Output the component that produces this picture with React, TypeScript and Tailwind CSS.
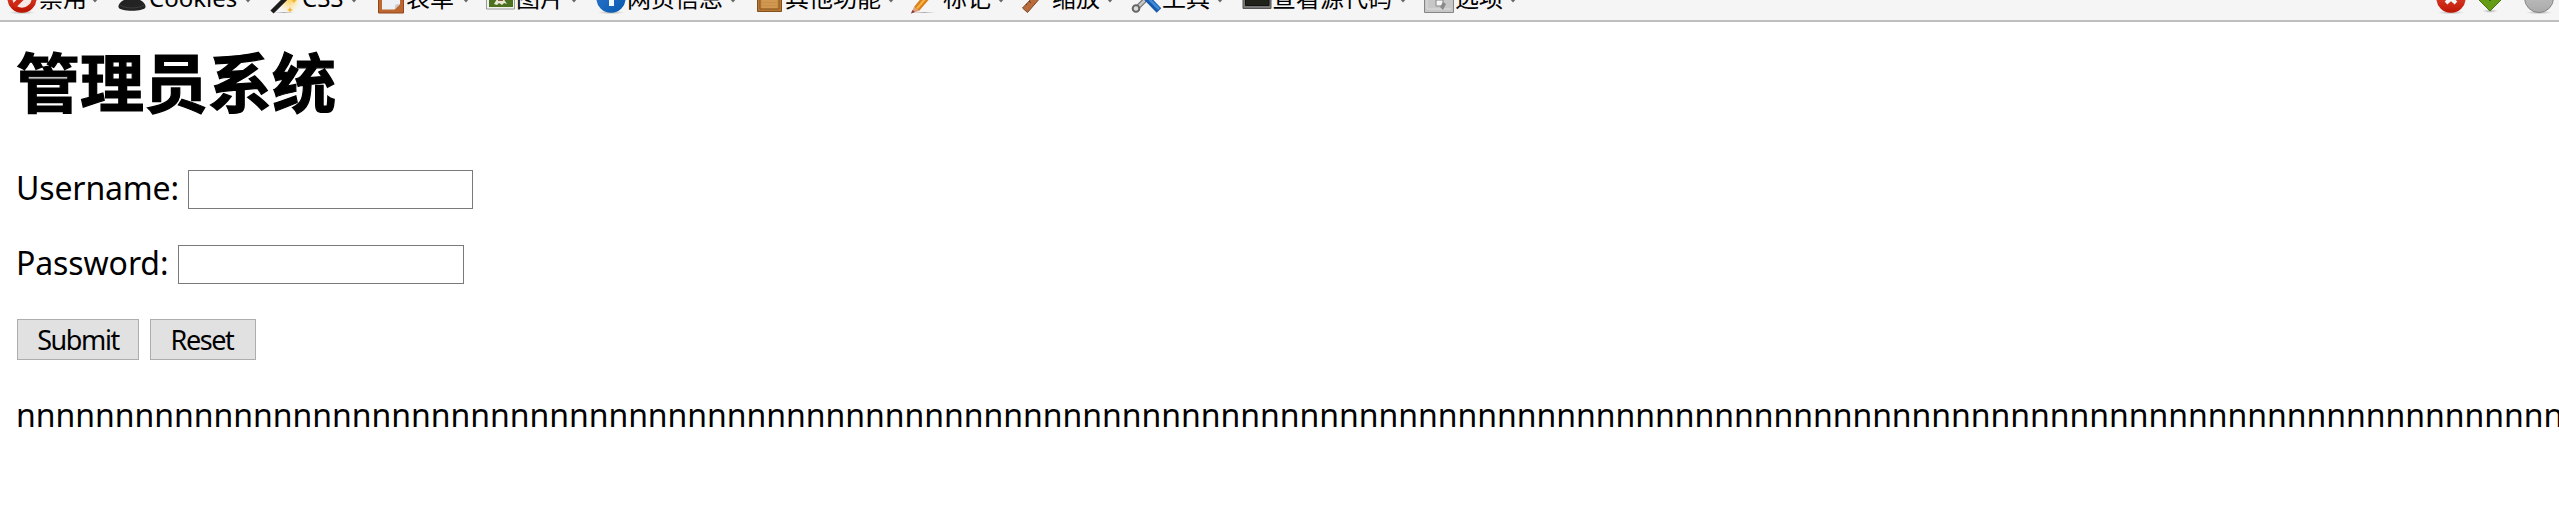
import type { ReactNode } from "react";

type Item = { label: string; width: string; gap: string; textWidth: string; icon: ReactNode };

const Defs = () => (
  <svg className="absolute h-0 w-0">
    <defs>
      <linearGradient id="red" x1="0" y1="0" x2="0" y2="1">
        <stop offset="0" stopColor="#ee5a45" />
        <stop offset="1" stopColor="#bd1603" />
      </linearGradient>
      <linearGradient id="blue" x1="0" y1="0" x2="1" y2="1">
        <stop offset="0" stopColor="#2f79cf" />
        <stop offset="1" stopColor="#0757ae" />
      </linearGradient>
      <linearGradient id="gray" x1="0" y1="0" x2="0" y2="1">
        <stop offset="0" stopColor="#c8c8c8" />
        <stop offset="1" stopColor="#aaaaaa" />
      </linearGradient>
      <radialGradient id="glow">
        <stop offset="0" stopColor="#ffd35a" />
        <stop offset="1" stopColor="#ffe9a8" stopOpacity="0" />
      </radialGradient>
      <radialGradient id="shadow">
        <stop offset="0" stopColor="#777" stopOpacity=".6" />
        <stop offset="1" stopColor="#999" stopOpacity="0" />
      </radialGradient>
    </defs>
  </svg>
);

const Svg = ({ children }: { children: ReactNode }) => (
  <svg width="30" height="20" viewBox="0 0 30 20" className="block shrink-0">
    {children}
  </svg>
);

const Shadow = ({ y = 12.5 }: { y?: number }) => <ellipse cx="15" cy={y} rx="14" ry="1.8" fill="url(#shadow)" />;

const items: Item[] = [
  {
    label: "禁用", width: "w-[110px]", gap: "ml-[2px]", textWidth: "w-[52px]",
    icon: (
      <Svg>
        <Shadow />
        <circle cx="15" cy="-2" r="12.2" fill="#f7e9e6" stroke="url(#red)" strokeWidth="5" />
        <path d="M23-10 7 6" stroke="#cf2915" strokeWidth="5" />
      </Svg>
    ),
  },
  {
    label: "Cookies", width: "w-[153px]", gap: "ml-[2px]", textWidth: "w-[95px]",
    icon: (
      <Svg>
        <path d="M9-5H20L20-1C25 0 29 4 28.5 7 28 12 2 12 1.500 7 1 4 5 0 10-1Z" fill="#232323" />
        <path d="M3 5C8 9 21 9 27 5" stroke="#3c3c3c" fill="none" />
      </Svg>
    ),
  },
  {
    label: "CSS", width: "w-[107px]", gap: "ml-[2px]", textWidth: "w-[48px]",
    icon: (
      <Svg>
        <circle cx="19" cy="1" r="12" fill="url(#glow)" />
        <ellipse cx="14" cy="12.500" rx="11" ry="1" fill="url(#shadow)" />
        <path d="m2 12 15-15" stroke="#1c1c1c" strokeWidth="4.500" />
        <path d="m1 10 13-13" stroke="#777" strokeWidth=".8" />
        <path d="m20 7 1 2 2 1-2 .7-1 2-1-2-2-.7 2-1ZM24-2l1 2 2 .8-2 .8-1 2-1-2-2-.8 2-.8Z" fill="#f5b52f" />
      </Svg>
    ),
  },
  {
    label: "表单", width: "w-[109px]", gap: "-ml-px", textWidth: "w-[56px]",
    icon: (
      <Svg>
        <path d="M1.500-2H26.500V13H1.500Z" fill="#bd6730" stroke="#91481c" />
        <path d="M5-2H23V4L17.500 9.500H5Z" fill="#eef0f5" />
        <path d="m17.500 9.500 1-5 4.500-.5Z" fill="#c9c9cd" />
      </Svg>
    ),
  },
  {
    label: "图片", width: "w-[110px]", gap: "ml-0", textWidth: "w-[54px]",
    icon: (
      <Svg>
        <path d="M.500-3H28.500V9H.500Z" fill="#f2f2ed" stroke="#999" />
        <path d="M3-3H27V7H3Z" fill="#4c701d" />
        <path d="m8 4 3-5 3 2 3-3 4 6-3-1-2 2-3-2-2 2Z" fill="#e5e8d3" />
        <path d="M12-2h5v3h-5Z" fill="#935d3b" />
      </Svg>
    ),
  },
  {
    label: "网页信息", width: "w-[160px]", gap: "ml-[1px]", textWidth: "w-[102px]",
    icon: (
      <Svg>
        <Shadow />
        <circle cx="15" cy="-2" r="14.700" fill="url(#blue)" />
        <path d="M13-4h5V6h-5Z" fill="#f0f6ff" />
      </Svg>
    ),
  },
  {
    label: "其他功能", width: "w-[154px]", gap: "-ml-[1px]", textWidth: "w-[102px]",
    icon: (
      <Svg>
        <path d="M1.500-3h24v14.500h-24Z" fill="#b97832" stroke="#80501e" />
        <path d="M4-3h19V9H4Z" fill="#c98e47" stroke="#87571f" />
        <path d="M6 1h15M6 4h15M6 7h15" stroke="#d9a35c" />
      </Svg>
    ),
  },
  {
    label: "标记", width: "w-[111px]", gap: "ml-[3px]", textWidth: "w-[54px]",
    icon: (
      <Svg>
        <ellipse cx="14" cy="12.500" rx="12" ry="1" fill="url(#shadow)" />
        <path d="M4 7 13-4h9L9 11Z" fill="#d97f18" />
        <path d="M6 8 16-4h3L8 9Z" fill="#f8b247" />
        <path d="m4 7 5 4-8 2.500Z" fill="#dfa079" />
        <path d="m2.500 10-1.500 3.500 4-1.500Z" fill="#823a43" />
      </Svg>
    ),
  },
  {
    label: "缩放", width: "w-[110px]", gap: "ml-[1px]", textWidth: "w-[54px]",
    icon: (
      <Svg>
        <path d="M1.500 8 12-3h8L6.500 12.500Z" fill="#b96c3c" stroke="#7b4424" />
        <path d="m8 1 2 2m1-5 2 2M5 4l1 1" stroke="#673718" />
      </Svg>
    ),
  },
  {
    label: "工具", width: "w-[111px]", gap: "ml-[1px]", textWidth: "w-[54px]",
    icon: (
      <Svg>
        <path d="m6 8 12-12" stroke="#777" strokeWidth="5" />
        <path d="m6 8 12-12" stroke="#c4c6c8" strokeWidth="2.500" />
        <circle cx="5" cy="8.500" r="3.300" fill="#ddd" stroke="#666" strokeWidth="2" />
        <path d="m12-6 16 16.500" stroke="#165bab" strokeWidth="6.500" />
        <path d="m13-6 15 15" stroke="#438cdc" strokeWidth="2.500" />
      </Svg>
    ),
  },
  {
    label: "查看源代码", width: "w-[182px]", gap: "ml-0", textWidth: "w-[127px]",
    icon: (
      <Svg>
        <path d="M1-2H29V8.500H1Z" fill="#777" stroke="#555" />
        <path d="M3.500-2H27V5.500H3.500Z" fill="#202219" stroke="#111" />
      </Svg>
    ),
  },
  {
    label: "选项", width: "w-[111px]", gap: "ml-[1px]", textWidth: "w-[54px]",
    icon: (
      <Svg>
        <path d="M.500-3h29v15.500H.500Z" fill="#c7c7c7" stroke="#858585" />
        <path d="M3 9h24M3-2v11" stroke="#d6d6d6" strokeWidth="1.500" />
        <path d="M12 0h7v6h-7Z" fill="#f5f5f5" stroke="#888" />
        <path d="m19 2 3 2-3 6-3-3Z" fill="#8b8b8b" />
      </Svg>
    ),
  },
];

const Toolbar = () => (
  <div className="flex h-[22px] justify-between overflow-hidden border-b-2 border-[#bebebe] bg-[#f5f5f5] pl-[7px] pr-[5px]">
    <div className="flex">
      {items.map((item) => (
        <div key={item.label} className={`flex shrink-0 ${item.width}`}>
          {item.icon}
          <span className={`-mt-[20px] h-9 shrink-0 whitespace-nowrap text-2xl leading-9 ${item.textWidth} ${item.gap}`}>
            {item.label}
          </span>
          <svg width="8" height="4" viewBox="0 0 8 4" className="shrink-0">
            <path d="M0-2h8L4 2.500Z" fill="#666" />
          </svg>
        </div>
      ))}
    </div>
    <div className="flex">
      <div className="w-[42px]">
        <Svg>
          <Shadow />
          <circle cx="15" cy="-2" r="14.700" fill="url(#red)" />
          <path d="m10-6 10 9M20-6 10 3" stroke="#f4f4f4" strokeWidth="4" />
        </Svg>
      </div>
      <div className="w-[46px]">
        <Svg>
          <ellipse cx="12" cy="11" rx="8" ry="2" fill="url(#shadow)" />
          <path d="m1 0 5-4h11l6 4-11 11Z" fill="#659c16" stroke="#467310" />
          <path d="m9-2 3 3 3-3" stroke="#3c660d" fill="none" />
        </Svg>
      </div>
      <Svg>
        <Shadow />
        <circle cx="15" cy="-2" r="14.500" fill="url(#gray)" stroke="#858585" />
      </Svg>
    </div>
  </div>
);

export default function App() {
  return (
    <div className="h-[515px] overflow-hidden bg-white font-['Noto_Sans','Noto_Sans_CJK_SC',sans-serif] text-black">
      <Defs />
      <Toolbar />
      <main className="pl-[17px]">
        <h1 className="-ml-px mt-[9px] h-[96px] whitespace-nowrap font-['Noto_Sans_CJK_SC',sans-serif] text-[64px] font-bold leading-[96px] [-webkit-text-stroke:1.2px_black]">
          管理员系统
        </h1>
        <form onSubmit={(e) => e.preventDefault()}>
          <div className="mt-[43px] flex h-[39px] items-center">
            <label htmlFor="username" className="-mt-[5px] -ml-px w-[172px] text-[32px] leading-[39px] tracking-[-0.15px]">Username:</label>
            <input id="username" className="h-[39px] w-[285px] border border-[#7a7a7a] bg-white px-1 text-[26px] outline-none" />
          </div>
          <div className="mt-9 flex h-[39px] items-center">
            <label htmlFor="password" className="-mt-[5px] -ml-px w-[162px] text-[32px] leading-[39px] tracking-[-0.1px]">Password:</label>
            <input id="password" type="password" className="h-[39px] w-[286px] border border-[#7a7a7a] bg-white px-1 text-[26px] outline-none" />
          </div>
          <div className="mt-[35px] flex gap-[11px] text-[27px] leading-[39px] tracking-[-1.4px]">
            <button type="submit" className="h-[41px] w-[122px] border border-[#adadad] bg-[#e1e1e1]">Submit</button>
            <button type="reset" className="h-[41px] w-[106px] border border-[#adadad] bg-[#e1e1e1] pr-[2px]">Reset</button>
          </div>
        </form>
        <p className="-ml-px mt-[33px] whitespace-nowrap text-[32px] leading-[43px] tracking-[-0.03px]">{"n".repeat(140)}</p>
      </main>
    </div>
  );
}
